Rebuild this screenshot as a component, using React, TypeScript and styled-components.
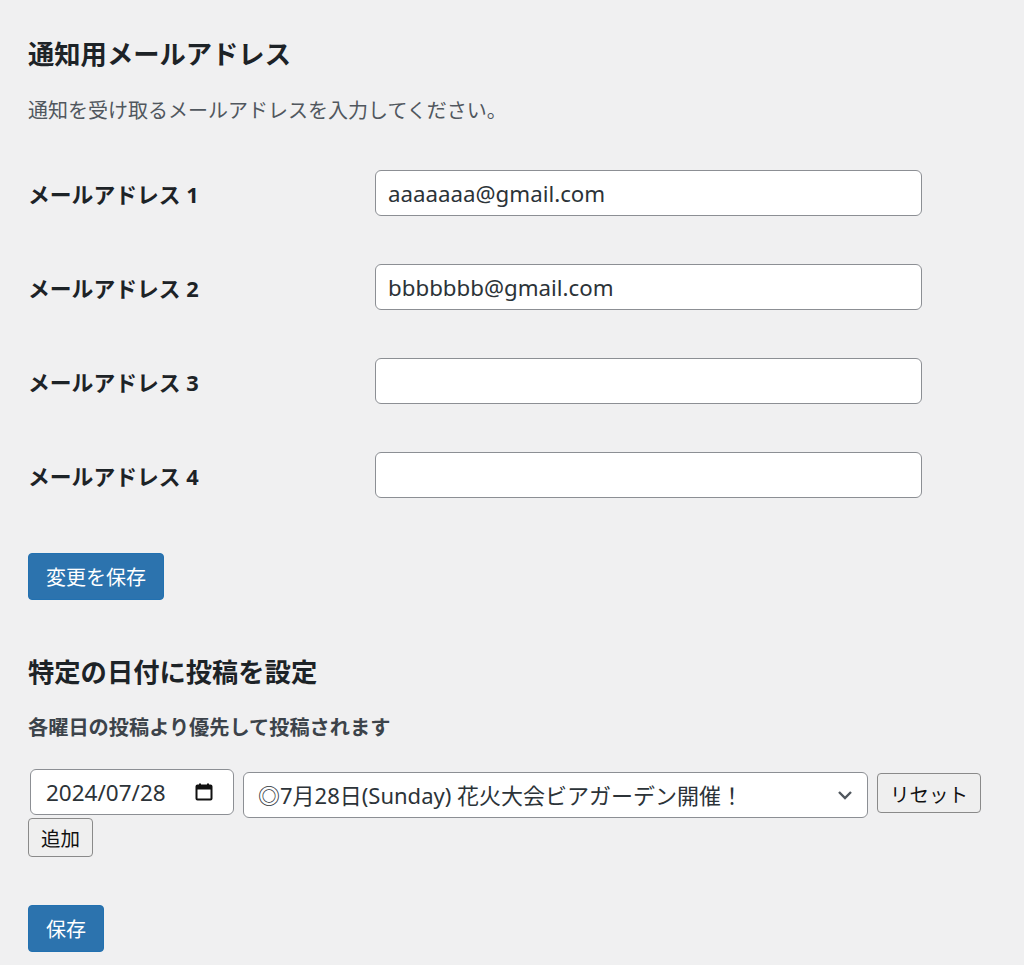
import React from "react";
import styled, { createGlobalStyle } from "styled-components";

const GlobalStyle = createGlobalStyle`
  html, body {
    margin: 0;
    padding: 0;
    background: #f0f0f1;
  }
  body {
    font-family: "Noto Sans", "Noto Sans CJK JP", sans-serif;
    color: #1d2327;
  }
`;

const Page = styled.div`
  padding: 37px 28px 0;
`;

const Heading = styled.h2<{ $top?: number }>`
  margin: ${(p) => p.$top ?? 0}px 0 0;
  font-size: 26.3px;
  line-height: 34px;
  font-weight: 700;
  color: #1d2327;
`;

const Description = styled.p<{ $strong?: boolean; $top: number }>`
  margin: ${(p) => p.$top}px 0 0;
  font-size: ${(p) => (p.$strong ? 20.2 : 20)}px;
  line-height: 28px;
  font-weight: ${(p) => (p.$strong ? 700 : 400)};
  color: ${(p) => (p.$strong ? "#3c434a" : "#50575e")};
`;

const FormTable = styled.div`
  margin-top: 45px;
  display: grid;
  grid-template-columns: 347px 547px;
  row-gap: 48px;
  align-items: center;
`;

const Label = styled.label`
  font-size: 21.8px;
  font-weight: 700;
  color: #1d2327;
`;

const TextInput = styled.input`
  box-sizing: border-box;
  width: 100%;
  height: 46px;
  padding: 0 12px;
  border: 1px solid #8c8f94;
  border-radius: 6px;
  background: #fff;
  font-family: "Noto Sans", "Noto Sans CJK JP", sans-serif;
  font-size: 22.3px;
  color: #2c3338;
  outline: none;
`;

const PrimaryButton = styled.button<{ $top: number }>`
  display: block;
  margin-top: ${(p) => p.$top}px;
  height: 47px;
  padding: 0 17px;
  border: 1px solid #2271b1;
  border-radius: 4px;
  background: #2c73ae;
  color: #fff;
  font-family: "Noto Sans CJK JP", sans-serif;
  font-size: 20px;
  cursor: pointer;
`;

const DateRow = styled.div`
  margin-top: 28px;
  display: flex;
  flex-wrap: wrap;
  align-items: flex-start;
  column-gap: 9px;
  row-gap: 0;
`;

const DateField = styled.div`
  box-sizing: border-box;
  margin-left: 2px;
  width: 204px;
  height: 46px;
  display: flex;
  align-items: center;
  padding: 0 20px 0 15px;
  border: 1px solid #8c8f94;
  border-radius: 6px;
  background: #fff;

  input {
    flex: 1;
    min-width: 0;
    border: none;
    outline: none;
    padding: 0;
    background: transparent;
    font-family: "Noto Sans", sans-serif;
    font-size: 22.5px;
    color: #2c3338;
  }

  svg {
    flex: none;
  }
`;

const SelectBox = styled.select`
  box-sizing: border-box;
  margin-top: 3px;
  width: 625px;
  height: 46px;
  padding: 0 40px 0 14px;
  appearance: none;
  border: 1px solid #8c8f94;
  border-radius: 6px;
  background: #fff
    url("data:image/svg+xml;utf8,<svg xmlns='http://www.w3.org/2000/svg' width='20' height='20' viewBox='0 0 20 20'><path d='M4 7l6 6 6-6' fill='none' stroke='%2350575e' stroke-width='2.4'/></svg>")
    no-repeat right 12px center;
  font-family: "Noto Sans", "Noto Sans CJK JP", sans-serif;
  font-size: 22px;
  color: #2c3338;
  outline: none;
`;

const SecondaryButton = styled.button<{ $height: number; $top?: number }>`
  margin-top: ${(p) => p.$top ?? 0}px;
  height: ${(p) => p.$height}px;
  padding: 0 12px;
  border: 1.5px solid #8a8a8a;
  border-radius: 4px;
  background: #efefef;
  color: #111;
  font-family: "Noto Sans CJK JP", sans-serif;
  font-size: 19.5px;
  cursor: pointer;
`;

const CalendarIcon = () => (
  <svg width="18" height="18" viewBox="0 0 18 18" aria-hidden>
    <rect x="1.5" y="2.5" width="15" height="14" rx="1" fill="none" stroke="#111" strokeWidth="2" />
    <rect x="1.5" y="2.5" width="15" height="4" fill="#111" />
    <rect x="4" y="0.5" width="2" height="3" fill="#111" />
    <rect x="12" y="0.5" width="2" height="3" fill="#111" />
  </svg>
);

const emails = ["aaaaaaa@gmail.com", "bbbbbbb@gmail.com", "", ""];

export default function App() {
  return (
    <>
      <GlobalStyle />
      <Page>
        <Heading>通知用メールアドレス</Heading>
        <Description $top={26}>通知を受け取るメールアドレスを入力してください。</Description>
        <FormTable>
          {emails.map((email, i) => (
            <React.Fragment key={i}>
              <Label htmlFor={`mail-${i + 1}`}>メールアドレス {i + 1}</Label>
              <TextInput id={`mail-${i + 1}`} type="email" defaultValue={email} />
            </React.Fragment>
          ))}
        </FormTable>
        <PrimaryButton $top={55}>変更を保存</PrimaryButton>

        <Heading $top={55}>特定の日付に投稿を設定</Heading>
        <Description $strong $top={24}>各曜日の投稿より優先して投稿されます</Description>
        <DateRow>
          <DateField>
            <input type="text" defaultValue="2024/07/28" />
            <CalendarIcon />
          </DateField>
          <SelectBox defaultValue="0728">
            <option value="0728">◎7月28日(Sunday) 花火大会ビアガーデン開催！</option>
          </SelectBox>
          <SecondaryButton $height={40} $top={4}>リセット</SecondaryButton>
          <SecondaryButton $height={39}>追加</SecondaryButton>
        </DateRow>
        <PrimaryButton $top={48}>保存</PrimaryButton>
      </Page>
    </>
  );
}
